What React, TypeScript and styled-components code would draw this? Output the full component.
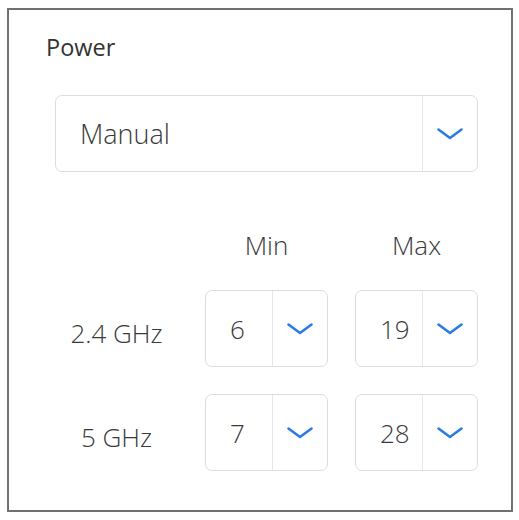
import React from "react";
import styled, { createGlobalStyle } from "styled-components";

const Global = createGlobalStyle`
  html, body { margin: 0; padding: 0; background: #ffffff; }
  body { font-family: "Open Sans", "Noto Sans", sans-serif; }
`;

const Panel = styled.div`
  box-sizing: border-box;
  margin: 8px 0 0 7px;
  width: 506px;
  height: 504px;
  border: 2px solid #717171;
  padding-top: 22px;
`;

const Title = styled.div`
  padding-left: 37px;
  font-size: 23.5px;
  line-height: 31px;
  color: #333333;
`;

const Body = styled.div`
  padding: 0 33px 0 46px;
`;

const SelectBox = styled.div<{ $wide?: boolean }>`
  box-sizing: border-box;
  display: flex;
  align-items: stretch;
  height: 77px;
  border: 1.5px solid #dddddd;
  border-radius: 7px;
  background: #ffffff;
  margin-top: ${(p) => (p.$wide ? "32px" : "0")};
`;

const Value = styled.div<{ $big?: boolean }>`
  flex: 1;
  display: flex;
  align-items: center;
  padding-left: 24px;
  font-size: ${(p) => (p.$big ? "27px" : "26px")};
  font-weight: 300;
  color: #3a3a3a;
`;

const Arrow = styled.div`
  width: 54px;
  display: flex;
  align-items: center;
  justify-content: center;
  border-left: 1px solid #e2e7ee;
`;

const Grid = styled.div`
  display: grid;
  grid-template-columns: 123px 123px 123px;
  column-gap: 27px;
  row-gap: 27px;
  margin-top: 55px;
`;

const Head = styled.div`
  text-align: center;
  font-size: 26px;
  font-weight: 300;
  line-height: 36px;
  color: #3a3a3a;
`;

const Label = styled.div`
  display: flex;
  align-items: center;
  justify-content: center;
  padding-top: 9px;
  font-size: 26px;
  font-weight: 300;
  color: #3a3a3a;
`;

const Chevron = () => (
  <svg width="28" height="14" viewBox="0 0 28 14">
    <polyline
      points="2.5,2.5 14,11 25.5,2.5"
      fill="none"
      stroke="#2a7be4"
      strokeWidth="2.6"
      strokeLinecap="round"
      strokeLinejoin="round"
    />
  </svg>
);

const Select = ({ value, wide }: { value: string; wide?: boolean }) => (
  <SelectBox $wide={wide}>
    <Value $big={wide}>{value}</Value>
    <Arrow>
      <Chevron />
    </Arrow>
  </SelectBox>
);

export default function App() {
  return (
    <>
      <Global />
      <Panel>
        <Title>Power</Title>
        <Body>
          <Select value="Manual" wide />
          <Grid>
            <div />
            <Head>Min</Head>
            <Head>Max</Head>
            <Label>2.4 GHz</Label>
            <Select value="6" />
            <Select value="19" />
            <Label>5 GHz</Label>
            <Select value="7" />
            <Select value="28" />
          </Grid>
        </Body>
      </Panel>
    </>
  );
}
